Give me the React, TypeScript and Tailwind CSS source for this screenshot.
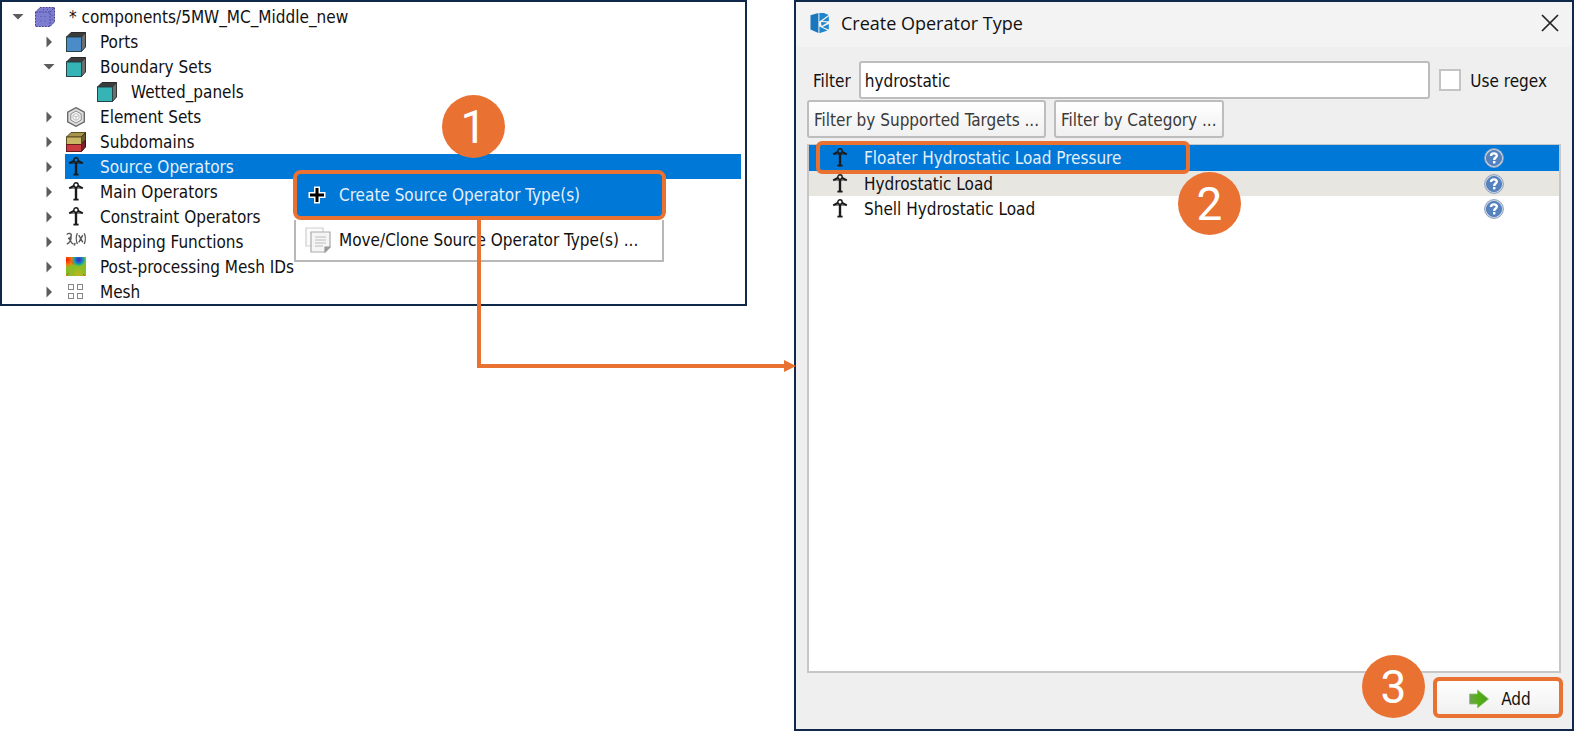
import { useState, type ReactNode } from "react";

type TreeItem = {
  label: string;
  level: number;
  icon: ReactNode;
  state?: "open" | "closed";
  selected?: boolean;
};

function CubeIcon({ front }: { front: string }) {
  return (
    <svg viewBox="0 0 20 20" className="size-5 shrink-0" aria-hidden="true">
      <path d="M0.5 5 L5 0.5 H19.5 L15.5 5 Z" fill="#3c3c3c" stroke="#2a2a2a" />
      <path d="M15.5 5 L19.5 0.5 V15 L15.5 19.5 Z" fill="#6e6e6e" stroke="#333" />
      <rect x="0.5" y="5" width="15" height="14.5" fill={front} stroke="#26444a" />
    </svg>
  );
}

function ComponentIcon() {
  return (
    <svg viewBox="0 0 20 20" className="size-5 shrink-0" aria-hidden="true">
      <path d="M0.5 5 L5 0.5 H19.5 V15 L15 19.5 H0.5 Z" fill="#7c7cd0" stroke="#44448c" strokeDasharray="2 1" />
      <path
        d="M1 5 H15 V19 M15 5 L19 1 M5.5 9.5 H6.5 M9.5 9.5 H10.5 M5.5 14 H6.5 M9.5 14 H10.5 M8 2.5 H9 M12 2.5 H13 M17 8 V9 M17 12 V13"
        fill="none"
        stroke="#4c4ca0"
        strokeDasharray="2 1"
      />
    </svg>
  );
}

function ElementIcon() {
  return (
    <svg viewBox="0 0 20 20" className="size-5 shrink-0" aria-hidden="true">
      <path d="M10 0.7 L18.3 5.2 V14.8 L10 19.3 L1.7 14.8 V5.2 Z" fill="#dedede" stroke="#6a6a6a" strokeWidth="1.4" />
      <path d="M10 4 L15.2 7 V13 L10 16 L4.8 13 V7 Z" fill="#f6f6f6" stroke="#8a8a8a" />
      <path d="M10 6.5 L13 8.3 V11.7 L10 13.5 L7 11.7 V8.3 Z M7 8.3 L10 10 L13 8.3 M10 10 V13.5" fill="#fff" stroke="#bdbdbd" />
    </svg>
  );
}

function SubdomainIcon() {
  return (
    <svg viewBox="0 0 20 20" className="size-5 shrink-0" aria-hidden="true">
      <path d="M0.5 5 L5 0.5 H19.5 L15.5 5 Z" fill="#a8934a" stroke="#5a4d22" />
      <path d="M15.5 5 L19.5 0.5 V8 L15.5 12 Z" fill="#6d6030" stroke="#3b3212" />
      <path d="M15.5 12 L19.5 8 V15 L15.5 19.5 Z" fill="#7a2226" stroke="#3a1012" />
      <rect x="0.5" y="5" width="15" height="7.5" fill="#c9b566" stroke="#5a4d22" />
      <rect x="0.5" y="12.5" width="15" height="7" fill="#c93a41" stroke="#6b1a1e" />
    </svg>
  );
}

function OperatorIcon() {
  return (
    <svg viewBox="0 0 20 20" className="size-5 shrink-0" aria-hidden="true" fill="none" stroke="#1a1a1a">
      <circle cx="10" cy="3" r="2.2" strokeWidth="1.4" />
      <path d="M8.2 3.6 L3.2 6.4 M11.8 3.6 L16.8 6.4" strokeWidth="2" />
      <path d="M5 6 H15" strokeWidth="1" />
      <path d="M10 5 V18" strokeWidth="2.4" />
      <path d="M7.4 17.6 H12.6" strokeWidth="1.8" />
    </svg>
  );
}

function MappingIcon() {
  return (
    <svg viewBox="0 0 20 20" className="size-5 shrink-0" aria-hidden="true" fill="none" stroke="#5a5a5a" strokeWidth="1.4">
      <path d="M0.8 2.6 C2.5 0.6 5.8 1.2 5.2 4 C4.8 6 2.8 6.4 2 6.4 M0.8 12 C3 11.4 4.8 8.6 5.2 5.4 M2.6 6.6 C4.4 6.8 4.6 11.6 7.6 12" />
      <path d="M9 10.8 L8.4 13.6" />
      <path d="M11.4 1.2 C10 4 10 9 11.4 12 M18.2 1.2 C19.6 4 19.6 9 18.2 12 M12.8 3.2 L16.8 10.4 M16.8 3.2 L12.8 10.4" />
    </svg>
  );
}

function ContourIcon() {
  return (
    <svg viewBox="0 0 20 20" className="size-5 shrink-0" aria-hidden="true">
      <defs>
        <radialGradient id="contour-hot" cx="0.05" cy="0.15" r="0.5">
          <stop offset="0" stopColor="#ff1a00" />
          <stop offset="0.5" stopColor="#f07a10" />
          <stop offset="1" stopColor="#9ac422" stopOpacity="0" />
        </radialGradient>
        <radialGradient id="contour-cold" cx="0.64" cy="0.15" r="0.36">
          <stop offset="0" stopColor="#4a1fb5" />
          <stop offset="0.45" stopColor="#1d6fd0" />
          <stop offset="0.75" stopColor="#22b58a" />
          <stop offset="1" stopColor="#5cc02c" stopOpacity="0" />
        </radialGradient>
        <radialGradient id="contour-warm" cx="0.6" cy="0.9" r="0.5">
          <stop offset="0" stopColor="#c8b41c" />
          <stop offset="1" stopColor="#8fbe2a" stopOpacity="0" />
        </radialGradient>
      </defs>
      <rect width="20" height="19" fill="#86bd27" />
      <rect width="20" height="19" fill="url(#contour-warm)" />
      <rect width="20" height="19" fill="url(#contour-hot)" />
      <path d="M7 0 H10 C8 4 9 6 8 8 C5 7 5 3 7 0 Z" fill="#f0501a" opacity="0.8" />
      <rect width="20" height="19" fill="url(#contour-cold)" />
      <path d="M0 19 L2.5 16 M19 19 L17 17" stroke="#e2501a" />
    </svg>
  );
}

function MeshIcon() {
  return (
    <svg viewBox="0 0 20 20" className="size-5 shrink-0" aria-hidden="true" fill="none" stroke="#868686">
      <rect x="2.5" y="2.5" width="5" height="5" />
      <rect x="11.5" y="2.5" width="5" height="5" />
      <rect x="2.5" y="11.5" width="5" height="5" />
      <rect x="11.5" y="11.5" width="5" height="5" />
    </svg>
  );
}

function PlusIcon() {
  return (
    <svg viewBox="0 0 24 24" className="size-6 shrink-0" aria-hidden="true">
      <path d="M12 3.5 V20.5 M3.5 12 H20.5" stroke="#fff" strokeWidth="6" />
      <path d="M12 5 V19 M5 12 H19" stroke="#000" strokeWidth="3" />
    </svg>
  );
}

function CloneIcon() {
  return (
    <svg viewBox="0 0 26 26" className="size-[26px] shrink-0" aria-hidden="true" strokeWidth="1.2">
      <path d="M1 1 H18 V19 H1 Z" fill="#fbfbfb" stroke="#cfcfcf" />
      <path d="M6 5 H25 V20 L20 25 H6 Z" fill="#f5f5f5" stroke="#ababab" />
      <path d="M25 20 H20 V25 Z" fill="#9a9a9a" stroke="#9a9a9a" />
      <path d="M10 10 H21 M10 13 H21 M10 16 H21 M10 19 H18" stroke="#d0d0d0" strokeWidth="1.6" />
    </svg>
  );
}

function CloseIcon() {
  return (
    <svg viewBox="0 0 18 18" className="size-[18px]" aria-hidden="true">
      <path d="M1 1 L17 17 M17 1 L1 17" stroke="#222" strokeWidth="1.7" />
    </svg>
  );
}

function AppLogo() {
  return (
    <svg viewBox="0 0 20 22" className="h-[22px] w-5 shrink-0" aria-hidden="true">
      <path d="M0.5 3.2 L8.4 1 V21 L0.5 17.5 Z" fill="#1877bd" />
      <path d="M9.4 1 L14 1 L18.6 3 L9.4 9.6 Z" fill="#1f86cc" />
      <path d="M18.8 4.2 V9.2 L12.6 9 Z" fill="#1f86cc" />
      <path d="M11 10 L17.4 10.6 L11.6 14 Z" fill="#1f86cc" />
      <path d="M18.8 12 V17.4 L12.6 15 Z" fill="#1f86cc" />
      <path d="M9.4 14.6 L17.6 18.6 L9.4 21.2 Z" fill="#1f86cc" />
    </svg>
  );
}

function HelpIcon() {
  return (
    <svg viewBox="0 0 20 20" className="size-5" aria-hidden="true">
      <circle cx="10" cy="10" r="9.4" fill="#cfdae8" stroke="#8a9fbd" strokeWidth="1" />
      <circle cx="10" cy="10" r="7.6" fill="#5583bf" stroke="#4a74ad" strokeWidth="0.8" />
      <path
        d="M7 8 C7 4.6 13 4.6 12.8 7.8 C12.7 9.6 10.2 9.6 10.2 12"
        fill="none"
        stroke="#fff"
        strokeWidth="2.4"
      />
      <rect x="9" y="13" width="2.4" height="2.4" fill="#fff" />
    </svg>
  );
}

function ArrowIcon() {
  return (
    <svg viewBox="0 0 20 20" className="size-5 shrink-0" aria-hidden="true">
      <defs>
        <linearGradient id="add-arrow" x1="0" y1="0" x2="1" y2="0">
          <stop offset="0" stopColor="#6f9f5a" />
          <stop offset="0.45" stopColor="#55b010" />
          <stop offset="1" stopColor="#4c9a2a" />
        </linearGradient>
      </defs>
      <path d="M0.5 5 H8.5 V1 L19.5 10 L8.5 19 V15 H0.5 Z" fill="url(#add-arrow)" stroke="#8cc46a" strokeWidth="0.8" />
    </svg>
  );
}

function Badge({ value, className }: { value: number; className: string }) {
  return (
    <span
      className={`absolute z-20 flex size-[63px] items-center justify-center rounded-full bg-[#e97132] font-[Roboto,sans-serif] text-[46px] leading-none text-white ${className}`}
    >
      {value}
    </span>
  );
}

const tree: TreeItem[] = [
  { label: "* components/5MW_MC_Middle_new", level: 0, icon: <ComponentIcon />, state: "open" },
  { label: "Ports", level: 1, icon: <CubeIcon front="#4a8bc8" />, state: "closed" },
  { label: "Boundary Sets", level: 1, icon: <CubeIcon front="#35b3b5" />, state: "open" },
  { label: "Wetted_panels", level: 2, icon: <CubeIcon front="#35b3b5" /> },
  { label: "Element Sets", level: 1, icon: <ElementIcon />, state: "closed" },
  { label: "Subdomains", level: 1, icon: <SubdomainIcon />, state: "closed" },
  { label: "Source Operators", level: 1, icon: <OperatorIcon />, state: "closed", selected: true },
  { label: "Main Operators", level: 1, icon: <OperatorIcon />, state: "closed" },
  { label: "Constraint Operators", level: 1, icon: <OperatorIcon />, state: "closed" },
  { label: "Mapping Functions", level: 1, icon: <MappingIcon />, state: "closed" },
  { label: "Post-processing Mesh IDs", level: 1, icon: <ContourIcon />, state: "closed" },
  { label: "Mesh", level: 1, icon: <MeshIcon />, state: "closed" },
];

const indents = ["pl-[10px]", "pl-[41px]", "pl-[72px]"];

const operators = ["Floater Hydrostatic Load Pressure", "Hydrostatic Load", "Shell Hydrostatic Load"];

function ContextMenu() {
  return (
    <div role="menu" className="absolute top-4 left-[291px] z-10 w-[373px] text-[#111]">
      <button
        role="menuitem"
        className="flex h-[50px] w-full items-center gap-[10px] rounded-lg border-4 border-[#e97132] bg-[#0078d7] pl-2 text-left text-[#e4effa]"
      >
        <PlusIcon />
        Create Source Operator Type(s)
      </button>
      <div className="mr-[2px] ml-px border-2 border-t-0 border-[#b8b8b8] bg-white">
        <button role="menuitem" className="flex h-10 w-full items-center gap-2 pl-[9px] text-left">
          <CloneIcon />
          Move/Clone Source Operator Type(s) ...
        </button>
      </div>
    </div>
  );
}

function ComponentTree() {
  return (
    <section className="relative border-2 border-[#10294a] bg-white pt-[2px]">
      <ul role="tree">
        {tree.map((item) => (
          <li
            key={item.label}
            role="treeitem"
            aria-selected={!!item.selected}
            className={`relative flex h-[25px] items-center pr-1 ${indents[item.level]}`}
          >
            <span className="flex w-[22px] shrink-0">
              {item.state === "open" && (
                <svg viewBox="0 0 12 12" className="size-3" aria-hidden="true">
                  <path d="M0.5 3 H11.5 L6 8.5 Z" fill="#5c5c5c" />
                </svg>
              )}
              {item.state === "closed" && (
                <svg viewBox="0 0 12 12" className="size-3" aria-hidden="true">
                  <path d="M3.5 0.5 V11.5 L9 6 Z" fill="#5c5c5c" />
                </svg>
              )}
            </span>
            <span
              className={`flex h-full flex-1 items-center gap-[14px] pl-px whitespace-nowrap ${
                item.selected ? "bg-[#0078d7] text-[#e4effa]" : ""
              }`}
            >
              {item.icon}
              {item.label}
            </span>
            {item.selected && <ContextMenu />}
          </li>
        ))}
      </ul>
      <Badge value={1} className="top-[93px] left-[440px]" />
      {/* connector from the menu entry to the dialog */}
      <div className="absolute top-[218px] -right-[43px] left-[475px] z-20 h-[148px] border-b-4 border-l-4 border-[#e97132]">
        <svg viewBox="0 0 12 12" className="absolute -right-2 -bottom-2 size-3" aria-hidden="true">
          <path d="M0 0 L12 6 L0 12 Z" fill="#e97132" />
        </svg>
      </div>
    </section>
  );
}

function OperatorDialog() {
  const [filter, setFilter] = useState("hydrostatic");
  const [regex, setRegex] = useState(false);

  return (
    <section
      role="dialog"
      aria-label="Create Operator Type"
      className="flex flex-col border-2 border-[#10294a] bg-[#efefef]"
    >
      <header className="flex h-[45px] items-center bg-[#f3f3f3] pr-[13px] pb-1 pl-[14px]">
        <AppLogo />
        <h1 className="ml-[11px] flex-1 font-['Open_Sans',sans-serif] text-[18px]">Create Operator Type</h1>
        <button aria-label="Close">
          <CloseIcon />
        </button>
      </header>

      <div className="flex flex-1 flex-col px-[11px] pt-[14px] pb-[11px]">
        <div className="flex items-center pr-[14px] pl-[6px]">
          <label htmlFor="filter" className="pt-[2px]">
            Filter
          </label>
          <input
            id="filter"
            value={filter}
            onChange={(e) => setFilter(e.target.value)}
            className="ml-2 h-[38px] min-w-0 flex-1 rounded-[3px] border-2 border-[#bdbdbd] bg-white px-1 pt-[2px] outline-none"
          />
          <input
            id="regex"
            type="checkbox"
            checked={regex}
            onChange={(e) => setRegex(e.target.checked)}
            className="ml-[9px] size-[22px] appearance-none border-2 border-[#c4c4c4] bg-white checked:bg-[#0078d7]"
          />
          <label htmlFor="regex" className="pt-[2px] pl-[9px]">
            Use regex
          </label>
        </div>

        <div className="mt-px flex gap-2 text-[#3a3a3a]">
          <button className="h-[38px] rounded-[3px] border-2 border-[#bdbdbd] bg-linear-to-b from-white to-[#f0f0f0] px-[5px] pt-[2px]">
            Filter by Supported Targets ...
          </button>
          <button className="h-[38px] rounded-[3px] border-2 border-[#bdbdbd] bg-linear-to-b from-white to-[#f0f0f0] px-[5px] pt-[2px]">
            Filter by Category ...
          </button>
        </div>

        <div className="relative mt-[6px] flex-1 border-2 border-t border-[#c6c6c6] bg-white">
          <ul>
            {operators.map((name, i) => (
              <li
                key={name}
                className={`flex h-[25px] items-center gap-[14px] pr-[55px] pl-[21px] first:h-[26px] ${
                  i === 0 ? "bg-[#0078d7] text-[#e4effa]" : i === 1 ? "bg-[#e8e6e1]" : ""
                }`}
              >
                <OperatorIcon />
                <span className="flex-1">{name}</span>
                <button aria-label={`Help for ${name}`}>
                  <HelpIcon />
                </button>
              </li>
            ))}
          </ul>
          <div className="absolute -top-1 left-[7px] h-[33px] w-[374px] rounded-md border-4 border-[#e97132]" />
          <Badge value={2} className="top-[27px] left-[369px]" />
        </div>

        <footer className="relative mt-1 flex justify-end">
          <Badge value={3} className="-top-[22px] right-[136px]" />
          <button className="-mr-[2px] flex h-[41px] w-[130px] items-center justify-center gap-3 rounded-md border-4 border-[#e97132] bg-linear-to-b from-white to-[#f0f0f0] pt-[2px] pl-1">
            <ArrowIcon />
            Add
          </button>
        </footer>
      </div>
    </section>
  );
}

export default function App() {
  return (
    <main className="grid min-h-screen grid-cols-[747fr_780fr] gap-x-[47px] bg-white pb-4 font-['DejaVu_Sans_Condensed','Noto_Sans',sans-serif] text-[17px] leading-[22px] text-[#111]">
      <div>
        <ComponentTree />
      </div>
      <OperatorDialog />
    </main>
  );
}
